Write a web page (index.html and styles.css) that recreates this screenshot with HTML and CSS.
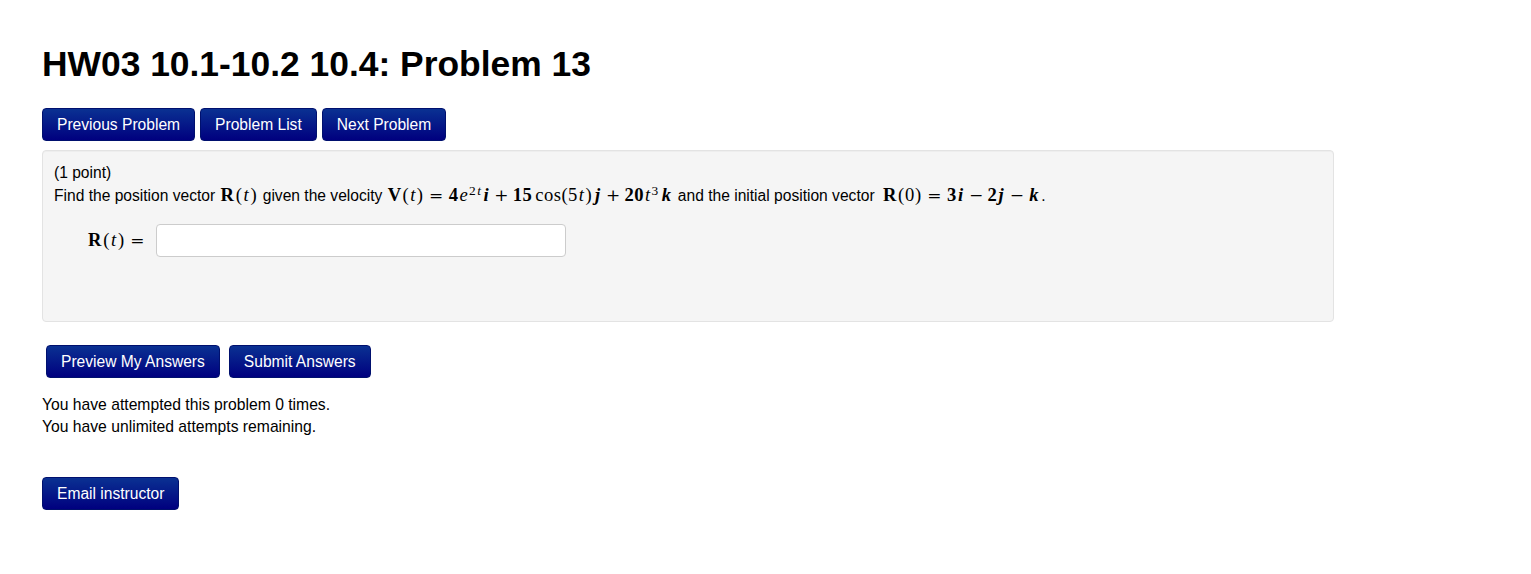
FILE: index.html
```html
<!DOCTYPE html>
<html>
<head>
<meta charset="utf-8">
<link rel="stylesheet" href="styles.css">
</head>
<body>
<div class="page">
  <h1 class="title">HW03 10.1-10.2 10.4: Problem 13</h1>
  <div class="nav">
    <button class="btn">Previous Problem</button>
    <button class="btn">Problem List</button>
    <button class="btn">Next Problem</button>
  </div>
  <div class="problem">
    <div class="line">(1 point)</div>
    <div class="line second">Find the position vector <span class="m"><b class="mb">R</b>(<i class="mi">t</i>)</span> given the velocity <span class="m tight"><b class="mb">V</b>(<i class="mi">t</i>)<span class="rel">=</span><b class="mn">4</b><i class="mi">e</i><sup class="sup">2<i class="mi">t</i></sup><b class="mbi">i</b><span class="bin">+</span><b class="mn">15</b><span class="fn">cos</span>(5<i class="mi">t</i>)<b class="mbi sp">j</b><span class="bin">+</span><b class="mn">20</b><i class="mi">t</i><sup class="sup">3</sup><b class="mbi sp">k</b></span> and the initial position vector <span class="m wide"><b class="mb">R</b>(0)<span class="rel">=</span><b class="mn">3</b><b class="mbi">i</b><span class="bin">−</span><b class="mn">2</b><b class="mbi">j</b><span class="bin">−</span><b class="mbi">k</b></span>.</div>
    <div class="answer">
      <span class="m"><b class="mb">R</b>(<i class="mi">t</i>)<span class="rel">=</span></span>
      <input class="field" type="text">
    </div>
  </div>
  <div class="submit">
    <button class="btn">Preview My Answers</button>
    <button class="btn">Submit Answers</button>
  </div>
  <div class="attempts">
    <div>You have attempted this problem 0 times.</div>
    <div>You have unlimited attempts remaining.</div>
  </div>
  <div class="email">
    <button class="btn">Email instructor</button>
  </div>
</div>
</body>
</html>
```

FILE: styles.css
```css
html, body {
  margin: 0;
  padding: 0;
  background: #ffffff;
}
body {
  font-family: "Liberation Sans", Arial, sans-serif;
  font-size: 15.6px;
  color: #000000;
}
.page {
  padding: 44px 0 0 42px;
}
.title {
  margin: 0;
  font-size: 35.4px;
  line-height: 40px;
  font-weight: bold;
  color: #000;
}
.nav {
  margin-top: 24px;
  display: flex;
  gap: 5px;
}
.btn {
  font-family: "Liberation Sans", Arial, sans-serif;
  font-size: 15.6px;
  line-height: 19px;
  color: #ffffff;
  padding: 6px 14px;
  border: 1px solid #00106e;
  border-radius: 4px;
  background: linear-gradient(to bottom, #0a3192 0%, #00007f 100%);
  cursor: pointer;
  margin: 0;
}
.problem {
  margin-top: 9px;
  width: 1268px;
  padding: 11px 11px 64px 11px;
  background: #f5f5f5;
  border: 1px solid #e3e3e3;
  border-radius: 4px;
  box-shadow: inset 0 1px 1px rgba(0,0,0,0.03);
}
.line {
  line-height: 22px;
  white-space: nowrap;
}
.second {
  margin-top: 1px;
}
.m {
  font-family: "Liberation Serif", "Times New Roman", serif;
  font-size: 18.6px;
  line-height: 1;
  letter-spacing: 0.7px;
  white-space: nowrap;
  margin: 0 1px;
}
.m.tight {
  letter-spacing: 0.45px;
}
.m.wide {
  margin-left: 4px;
}
.mb {
  font-weight: bold;
  font-style: normal;
  margin-right: 1px;
}
.mi {
  font-style: italic;
  font-weight: normal;
  padding: 0 1px;
}
.mn {
  font-weight: bold;
}
.mbi {
  font-weight: bold;
  font-style: italic;
  padding: 0 1px;
}
.sp {
  margin-left: 2px;
}
.fn {
  margin-left: 3px;
}
.sup {
  font-size: 0.72em;
  line-height: 0;
  vertical-align: 0.48em;
}
.rel, .bin {
  font-family: "DejaVu Serif", serif;
  font-size: 17px;
  letter-spacing: 0;
}
.rel {
  margin: 0 0.32em;
}
.bin {
  margin: 0 0.25em;
}
.answer {
  margin-top: 17px;
  padding-left: 34px;
  display: flex;
  align-items: center;
  gap: 6px;
}
.answer .m {
  margin: 0;
}
.field {
  width: 410px;
  height: 33px;
  box-sizing: border-box;
  border: 1px solid #cccccc;
  border-radius: 4px;
  background: #ffffff;
  margin: 0;
  padding: 4px 6px;
}
.submit {
  margin-top: 23px;
  margin-left: 4px;
  display: flex;
  gap: 9px;
}
.attempts {
  margin-top: 16px;
  line-height: 22px;
  font-size: 15.7px;
}
.email {
  margin-top: 39px;
}
```
